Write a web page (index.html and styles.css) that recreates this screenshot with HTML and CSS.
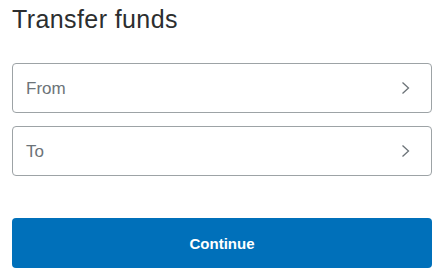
FILE: index.html
```html
<!DOCTYPE html>
<html lang="en">
<head>
<meta charset="utf-8">
<title>Transfer funds</title>
<link rel="stylesheet" href="styles.css">
</head>
<body>
<main class="page">
  <h1 class="title">Transfer funds</h1>
  <div class="fields">
    <button class="field" type="button">
      <span class="field-label">From</span>
      <svg class="chevron" width="9" height="14" viewBox="0 0 9 14" aria-hidden="true"><path d="M1.5 1.5 L7.5 7 L1.5 12.5" fill="none" stroke="#6c7378" stroke-width="1.3"/></svg>
    </button>
    <button class="field" type="button">
      <span class="field-label">To</span>
      <svg class="chevron" width="9" height="14" viewBox="0 0 9 14" aria-hidden="true"><path d="M1.5 1.5 L7.5 7 L1.5 12.5" fill="none" stroke="#6c7378" stroke-width="1.3"/></svg>
    </button>
  </div>
  <button class="continue" type="button">Continue</button>
</main>
</body>
</html>
```
FILE: styles.css
```css
html, body {
  margin: 0;
  padding: 0;
  background: #ffffff;
}
body {
  font-family: "Liberation Sans", Arial, sans-serif;
  color: #2c2e2f;
}
.page {
  padding: 5px 11px 0 12px;
  display: flex;
  flex-direction: column;
}
.title {
  margin: 0;
  font-size: 25px;
  line-height: 28px;
  font-weight: 400;
  letter-spacing: 0.4px;
  color: #2c2e2f;
}
.fields {
  margin-top: 30px;
  display: flex;
  flex-direction: column;
  gap: 13px;
}
.field {
  display: flex;
  align-items: center;
  justify-content: space-between;
  box-sizing: border-box;
  height: 50px;
  width: 100%;
  padding: 0 21px 0 13px;
  border: 1px solid #9da3a6;
  border-radius: 4px;
  background: #ffffff;
  font-family: inherit;
  cursor: pointer;
}
.field-label {
  font-size: 17px;
  color: #6c7378;
  padding-top: 2px;
}
.chevron {
  display: block;
}
.continue {
  margin-top: 42px;
  box-sizing: border-box;
  height: 50px;
  width: 100%;
  border: none;
  border-radius: 4px;
  background: #0070ba;
  color: #ffffff;
  font-family: inherit;
  font-size: 15px;
  font-weight: 700;
  cursor: pointer;
}
```
